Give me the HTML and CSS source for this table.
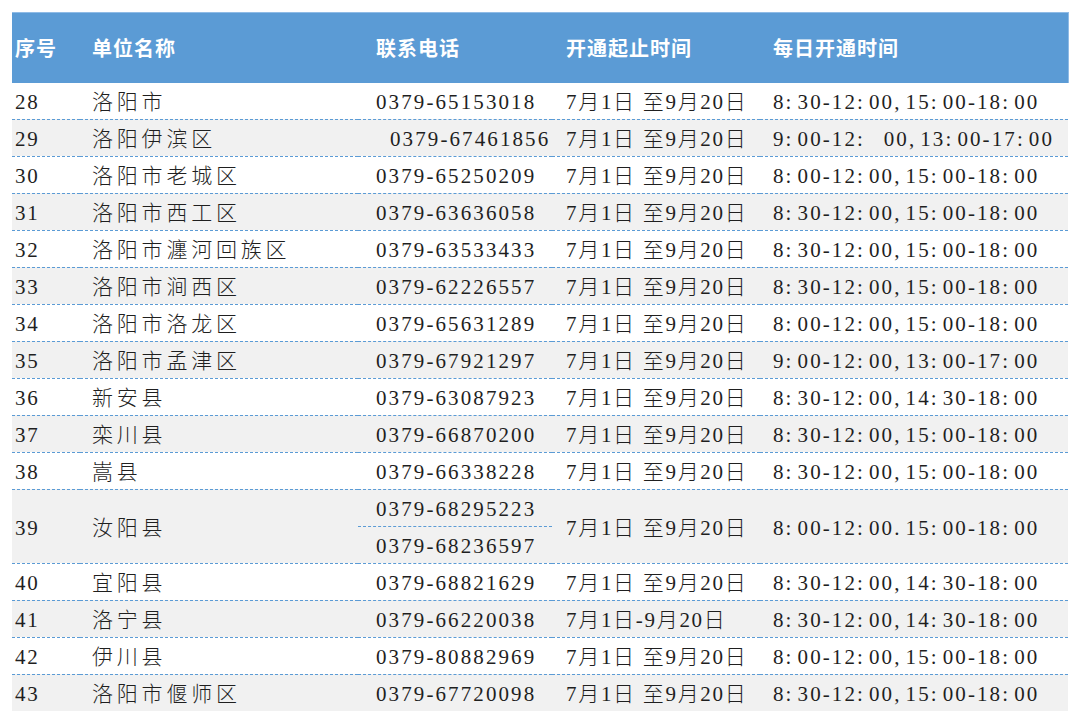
FILE: index.html
```html
<!DOCTYPE html>
<html lang="zh-CN">
<head>
<meta charset="utf-8">
<title>洛阳市开通时间表</title>
<link rel="stylesheet" href="styles.css">
</head>
<body>
<div class="page">
<table class="tbl">
<colgroup>
<col class="c1"><col class="c2"><col class="c3"><col class="c4"><col class="c5">
</colgroup>
<thead>
<tr><th class="no">序号</th><th class="name">单位名称</th><th class="tel">联系电话</th><th class="date">开通起止时间</th><th class="hours">每日开通时间</th></tr>
</thead>
<tbody>
<tr><td class="no">28</td><td class="name">洛阳市</td><td class="tel">0379-65153018</td><td class="date">7月1日 至9月20日</td><td class="hours">8<span class="p">:</span>30-12<span class="p">:</span>00<span class="p">,</span>15<span class="p">:</span>00-18<span class="p">:</span>00</td></tr>
<tr class="alt"><td class="no">29</td><td class="name">洛阳伊滨区</td><td class="tel indent">0379-67461856</td><td class="date">7月1日 至9月20日</td><td class="hours">9<span class="p">:</span>00-12<span class="p">:</span>&nbsp;&nbsp;00<span class="p">,</span>13<span class="p">:</span>00-17<span class="p">:</span>00</td></tr>
<tr><td class="no">30</td><td class="name">洛阳市老城区</td><td class="tel">0379-65250209</td><td class="date">7月1日 至9月20日</td><td class="hours">8<span class="p">:</span>00-12<span class="p">:</span>00<span class="p">,</span>15<span class="p">:</span>00-18<span class="p">:</span>00</td></tr>
<tr class="alt"><td class="no">31</td><td class="name">洛阳市西工区</td><td class="tel">0379-63636058</td><td class="date">7月1日 至9月20日</td><td class="hours">8<span class="p">:</span>30-12<span class="p">:</span>00<span class="p">,</span>15<span class="p">:</span>00-18<span class="p">:</span>00</td></tr>
<tr><td class="no">32</td><td class="name">洛阳市瀍河回族区</td><td class="tel">0379-63533433</td><td class="date">7月1日 至9月20日</td><td class="hours">8<span class="p">:</span>30-12<span class="p">:</span>00<span class="p">,</span>15<span class="p">:</span>00-18<span class="p">:</span>00</td></tr>
<tr class="alt"><td class="no">33</td><td class="name">洛阳市涧西区</td><td class="tel">0379-62226557</td><td class="date">7月1日 至9月20日</td><td class="hours">8<span class="p">:</span>30-12<span class="p">:</span>00<span class="p">,</span>15<span class="p">:</span>00-18<span class="p">:</span>00</td></tr>
<tr><td class="no">34</td><td class="name">洛阳市洛龙区</td><td class="tel">0379-65631289</td><td class="date">7月1日 至9月20日</td><td class="hours">8<span class="p">:</span>00-12<span class="p">:</span>00<span class="p">,</span>15<span class="p">:</span>00-18<span class="p">:</span>00</td></tr>
<tr class="alt"><td class="no">35</td><td class="name">洛阳市孟津区</td><td class="tel">0379-67921297</td><td class="date">7月1日 至9月20日</td><td class="hours">9<span class="p">:</span>00-12<span class="p">:</span>00<span class="p">,</span>13<span class="p">:</span>00-17<span class="p">:</span>00</td></tr>
<tr><td class="no">36</td><td class="name">新安县</td><td class="tel">0379-63087923</td><td class="date">7月1日 至9月20日</td><td class="hours">8<span class="p">:</span>30-12<span class="p">:</span>00<span class="p">,</span>14<span class="p">:</span>30-18<span class="p">:</span>00</td></tr>
<tr class="alt"><td class="no">37</td><td class="name">栾川县</td><td class="tel">0379-66870200</td><td class="date">7月1日 至9月20日</td><td class="hours">8<span class="p">:</span>30-12<span class="p">:</span>00<span class="p">,</span>15<span class="p">:</span>00-18<span class="p">:</span>00</td></tr>
<tr><td class="no">38</td><td class="name">嵩县</td><td class="tel">0379-66338228</td><td class="date">7月1日 至9月20日</td><td class="hours">8<span class="p">:</span>30-12<span class="p">:</span>00<span class="p">,</span>15<span class="p">:</span>00-18<span class="p">:</span>00</td></tr>
<tr class="alt split"><td class="no" rowspan="2">39</td><td class="name" rowspan="2">汝阳县</td><td class="tel">0379-68295223</td><td class="date" rowspan="2">7月1日 至9月20日</td><td class="hours" rowspan="2">8<span class="p">:</span>00-12<span class="p">:</span>00<span class="p">.</span>15<span class="p">:</span>00-18<span class="p">:</span>00</td></tr>
<tr class="alt"><td class="tel">0379-68236597</td></tr>
<tr><td class="no">40</td><td class="name">宜阳县</td><td class="tel">0379-68821629</td><td class="date">7月1日 至9月20日</td><td class="hours">8<span class="p">:</span>30-12<span class="p">:</span>00<span class="p">,</span>14<span class="p">:</span>30-18<span class="p">:</span>00</td></tr>
<tr class="alt"><td class="no">41</td><td class="name">洛宁县</td><td class="tel">0379-66220038</td><td class="date">7月1日-9月20日</td><td class="hours">8<span class="p">:</span>30-12<span class="p">:</span>00<span class="p">,</span>14<span class="p">:</span>30-18<span class="p">:</span>00</td></tr>
<tr><td class="no">42</td><td class="name">伊川县</td><td class="tel">0379-80882969</td><td class="date">7月1日 至9月20日</td><td class="hours">8<span class="p">:</span>00-12<span class="p">:</span>00<span class="p">,</span>15<span class="p">:</span>00-18<span class="p">:</span>00</td></tr>
<tr class="alt last"><td class="no">43</td><td class="name">洛阳市偃师区</td><td class="tel">0379-67720098</td><td class="date">7月1日 至9月20日</td><td class="hours">8<span class="p">:</span>30-12<span class="p">:</span>00<span class="p">,</span>15<span class="p">:</span>00-18<span class="p">:</span>00</td></tr>
</tbody>
</table>
</div>
</body>
</html>
```
FILE: styles.css
```css
html, body {
  margin: 0;
  padding: 0;
  background: #ffffff;
}

.page {
  padding: 12px 12px 0 12px;
}

.tbl {
  width: 1056px;
  border-collapse: collapse;
  table-layout: fixed;
  font-family: "Liberation Serif", "Noto Sans CJK SC", serif;
  font-size: 21px;
  font-weight: 300;
  color: #1f1f1f;
}

.c1 { width: 68px; }
.c2 { width: 278px; }
.c3 { width: 194px; }
.c4 { width: 208px; }
.c5 { width: 308px; }

.tbl thead tr {
  height: 70px;
  background: #5b9bd5;
}

.tbl th {
  font-family: "Noto Sans CJK SC", sans-serif;
  font-weight: 700;
  font-size: 20px;
  letter-spacing: 1px;
  color: #ffffff;
  text-align: left;
  vertical-align: middle;
  padding: 0;
  border-top: 1px solid #8fbbe6;
  white-space: nowrap;
}

.tbl th:last-child {
  border-right: 1px solid #8fbbe6;
}

.tbl td {
  height: 33px;
  padding: 3px 0 0 0;
  vertical-align: middle;
  text-align: left;
  white-space: nowrap;
  letter-spacing: 1.7px;
  border-bottom: 1px dashed #5b9bd5;
  line-height: 26px;
}

.tbl tr.alt td {
  background: #f1f1f1;
}

.tbl tr.last td {
  border-bottom: none;
}

.tbl td.no, .tbl th.no { padding-left: 3px; }
.tbl td.name, .tbl th.name { padding-left: 12px; }
.tbl td.name { letter-spacing: 3.8px; }
.tbl td.tel, .tbl th.tel { padding-left: 18px; }
.tbl td.tel { letter-spacing: 2.1px; }
.tbl td.tel.indent { padding-left: 32px; }
.tbl td.date, .tbl th.date { padding-left: 14px; }
.tbl td.hours, .tbl th.hours { padding-left: 13px; }
.tbl td.hours { letter-spacing: 2.1px; }
.tbl td.hours .p { margin-right: 4px; }
```
